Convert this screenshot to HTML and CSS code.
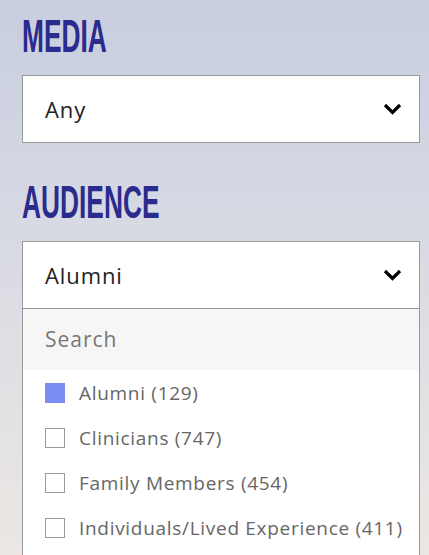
FILE: index.html
```html
<!DOCTYPE html>
<html lang="en">
<head>
  <meta charset="UTF-8">
  <meta name="viewport" content="width=device-width, initial-scale=1.0">
  <title>Filters</title>
  <link rel="stylesheet" href="styles.css">
</head>
<body>
  <div class="filters">
    <div class="filter">
      <h2 class="filter-title"><span>MEDIA</span></h2>
      <div class="select">
        <span class="select-value">Any</span>
        <svg class="chevron" viewBox="0 0 19 12" width="19" height="12"><path d="M2 2l7.5 7.5 7.5-7.5" fill="none" stroke="#000" stroke-width="3.2"/></svg>
      </div>
    </div>

    <div class="filter">
      <h2 class="filter-title"><span>AUDIENCE</span></h2>
      <div class="select open">
        <span class="select-value">Alumni</span>
        <svg class="chevron" viewBox="0 0 19 12" width="19" height="12"><path d="M2 2l7.5 7.5 7.5-7.5" fill="none" stroke="#000" stroke-width="3.2"/></svg>
      </div>
      <div class="dropdown">
        <div class="search">Search</div>
        <ul class="options">
          <li class="option checked"><span class="box"></span>Alumni (129)</li>
          <li class="option"><span class="box"></span>Clinicians (747)</li>
          <li class="option"><span class="box"></span>Family Members (454)</li>
          <li class="option"><span class="box"></span>Individuals/Lived Experience (411)</li>
        </ul>
      </div>
    </div>
  </div>
</body>
</html>
```

FILE: styles.css
```css
html, body {
  height: 100%;
}

body {
  margin: 0;
  background: linear-gradient(180deg, #c8cee0 0%, #d7d9e3 40%, #ece7e3 100%);
  font-family: "Open Sans", Lato, sans-serif;
  overflow: hidden;
}

.filters {
  padding: 13px 9px 0 22px;
}

.filter {
  margin-bottom: 36px;
}

.filter-title {
  margin: 0 0 16px;
  height: 46px;
  font-family: "Liberation Sans Narrow", "Liberation Sans", sans-serif;
  font-weight: 700;
  font-size: 47px;
  line-height: 46px;
  color: #2a2b8c;
  white-space: nowrap;
}

.filter-title span {
  display: inline-block;
  transform: scaleX(0.56);
  transform-origin: left center;
}

.select {
  display: flex;
  align-items: center;
  justify-content: space-between;
  height: 66px;
  padding: 0 17px 0 22px;
  background: #fff;
  border: 1px solid #999;
}

.select-value {
  font-size: 22px;
  letter-spacing: 0.9px;
  color: #222;
}

.dropdown {
  background: #fff;
  border: 1px solid #999;
  border-top: 0;
}

.search {
  height: 61px;
  line-height: 61px;
  padding-left: 22px;
  background: #f6f6f6;
  font-size: 21px;
  letter-spacing: 1px;
  color: #777;
}

.options {
  list-style: none;
  margin: 0;
  padding: 0 0 40px;
}

.option {
  display: flex;
  align-items: center;
  height: 45px;
  padding-left: 22px;
  font-size: 19px;
  letter-spacing: 0.7px;
  color: #666;
}

.box {
  flex: none;
  width: 20px;
  height: 20px;
  margin-right: 14px;
  border: 1px solid #999;
  box-sizing: border-box;
  background: #fff;
}

.option.checked .box {
  background: #7b8cf3;
  border: 0;
}
```
